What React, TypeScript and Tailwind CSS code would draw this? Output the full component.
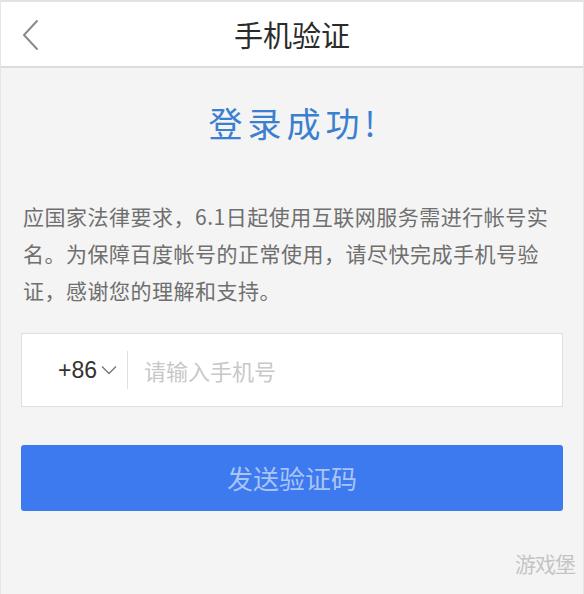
import React from 'react'

const font = { fontFamily: '"Noto Sans CJK SC", "Liberation Sans", sans-serif' }

export default function App() {
  return (
    <div className="w-[584px] h-[594px] bg-[#f4f4f4] flex flex-col overflow-hidden border-x border-[#e6e6e6]" style={font}>
      {/* 顶部导航 */}
      <div className="h-[68px] bg-white border-t-2 border-[#e2e2e2] border-b-2 border-b-[#dcdcdc] flex items-center relative shrink-0">
        <svg className="absolute left-[20px] top-[17px]" width="20" height="32" viewBox="0 0 20 32" fill="none">
          <path d="M16 2 L3 16 L16 30" stroke="#8a8a8a" strokeWidth="2" strokeLinecap="round" strokeLinejoin="round" />
        </svg>
        <div className="flex-1 text-center text-[29px] text-[#2b2b2b] leading-none">手机验证</div>
      </div>

      <div className="flex flex-col px-[20px]">
        <div className="mt-[38px] text-center text-[34px] text-[#3b7fcf] tracking-[5px] leading-none pl-[5px]">登录成功!</div>

        <p className="mt-[58px] pl-[2px] text-[21px] leading-[37px] tracking-[0.5px] text-[#6f6f6f] pr-[8px]">
          应国家法律要求，6.1日起使用互联网服务需进行帐号实名。为保障百度帐号的正常使用，请尽快完成手机号验证，感谢您的理解和支持。
        </p>

        <div className="mt-[24px] h-[74px] bg-white border border-[#dedede] flex items-center">
          <div className="w-[105px] flex items-center justify-end pr-[10px] text-[23px] text-[#333] leading-none" style={{ fontFamily: '"Liberation Sans", sans-serif' }}>
            +86
            <svg className="ml-[4px]" width="16" height="10" viewBox="0 0 16 10" fill="none">
              <path d="M1 1.5 L8 8.5 L15 1.5" stroke="#777" strokeWidth="1.4" />
            </svg>
          </div>
          <div className="w-px h-[38px] bg-[#e0e0e0]" />
          <div className="ml-[16px] text-[22px] text-[#c8c8c8] leading-none">请输入手机号</div>
        </div>

        <div className="mt-[38px] h-[66px] rounded-[3px] bg-[#3d79ef] flex items-center justify-center text-[26px] text-[#a9c4f6] leading-none">
          发送验证码
        </div>

        <div className="mt-[42px] self-end mr-[-12px] text-[21px] text-[#c4c4c4] leading-none tracking-[-1px]">游戏堡</div>
      </div>
    </div>
  )
}
